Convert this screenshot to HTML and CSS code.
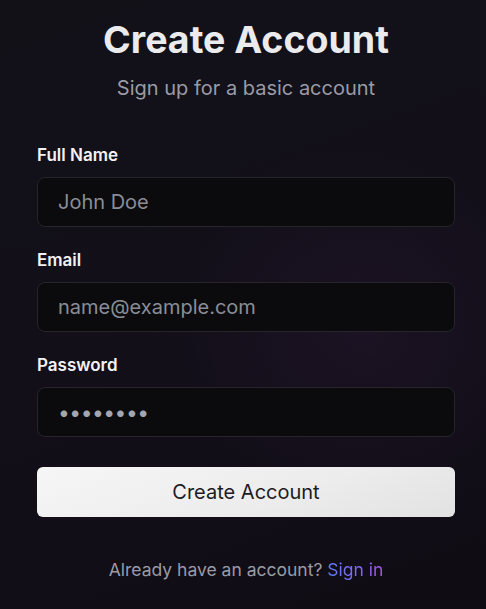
FILE: index.html
```html
<!DOCTYPE html>
<html lang="en">
<head>
<meta charset="utf-8">
<title>Create Account</title>
<link rel="stylesheet" href="styles.css">
</head>
<body>
<main class="page">
  <header class="head">
    <h1 class="title">Create Account</h1>
    <p class="subtitle">Sign up for a basic account</p>
  </header>
  <form class="form">
    <div class="field">
      <label class="label" for="name">Full Name</label>
      <input class="input" id="name" type="text" placeholder="John Doe">
    </div>
    <div class="field">
      <label class="label" for="email">Email</label>
      <input class="input" id="email" type="email" placeholder="name@example.com">
    </div>
    <div class="field">
      <label class="label" for="pw">Password</label>
      <input class="input input-pw" id="pw" type="text" placeholder="••••••••">
    </div>
    <button class="btn" type="button">Create Account</button>
  </form>
  <p class="footer">Already have an account? <a class="link" href="#">Sign in</a></p>
</main>
</body>
</html>
```
FILE: styles.css
```css
* { box-sizing: border-box; }
html, body { margin: 0; height: 100%; }
body {
  font-family: Inter, "Noto Sans", sans-serif;
  background:
    radial-gradient(ellipse 60% 45% at 75% 55%, rgba(55, 28, 65, 0.28), transparent 70%),
    linear-gradient(160deg, #121118 0%, #120f19 50%, #0f0c14 100%);
  color: #e8e8ea;
}
.page {
  padding: 18px 31px 0 37px;
  display: flex;
  flex-direction: column;
}
.head { text-align: center; }
.title {
  margin: 0;
  font-size: 37.5px;
  font-weight: 700;
  line-height: 44px;
  color: #ebebed;
}
.subtitle {
  margin: 13px 0 0;
  font-size: 20px;
  line-height: 26px;
  color: #9a9ba6;
}
.form {
  margin-top: 42px;
  display: flex;
  flex-direction: column;
  gap: 21px;
}
.field { display: flex; flex-direction: column; gap: 10px; }
.label {
  font-size: 17px;
  font-weight: 600;
  line-height: 24px;
  color: #f2f2f4;
}
.input {
  height: 50px;
  border: 1px solid #26252c;
  border-radius: 8px;
  background: #0b0b0d;
  padding: 0 20px;
  font-family: inherit;
  font-size: 20px;
  color: #e8e8ea;
  outline: none;
}
.input::placeholder { color: #8a8d97; }
.input-pw { font-size: 21px; letter-spacing: -0.5px; }
.input-pw::placeholder { color: #a3a6b0; }
.btn {
  margin-top: 9px;
  height: 50px;
  border: none;
  border-radius: 6px;
  background: linear-gradient(160deg, #f6f6f6 0%, #ececec 60%, #e2e2e2 100%);
  font-family: inherit;
  font-size: 20px;
  color: #1c1c1e;
}
.footer {
  margin: 41px 0 0;
  text-align: center;
  font-size: 17.5px;
  line-height: 24px;
  color: #9a9ba6;
}
.link {
  text-decoration: none;
  background: linear-gradient(90deg, #5b7df5, #a354f0);
  -webkit-background-clip: text;
  background-clip: text;
  color: transparent;
}
```
